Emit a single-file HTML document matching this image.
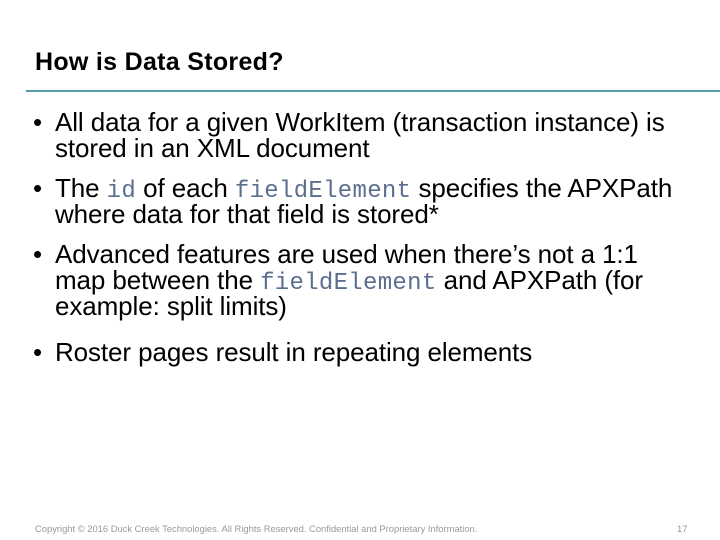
<!DOCTYPE html>
<html><head><style>
body{margin:0;width:720px;height:540px;background:#fff;position:relative;overflow:hidden;font-family:"Liberation Sans",Arial,sans-serif;color:#000}
.t{position:absolute;left:35px;top:48px;font-size:25px;font-weight:bold;letter-spacing:0.3px}
.rule{position:absolute;left:26px;top:90px;width:694px;height:2px;background:#5a99a8}
.l{position:absolute;left:55px;font-size:26px;white-space:nowrap;line-height:26px;letter-spacing:-0.1px}
.b{position:absolute;left:33px;font-size:26px;line-height:26px}
code{font-family:"Liberation Mono",monospace;color:#5b6f8f;font-size:24px;letter-spacing:0.3px}
.f{position:absolute;left:35px;top:523px;font-size:9.4px;color:#999}
.n{position:absolute;left:677px;top:523px;font-size:9.4px;color:#999}
</style></head><body>
<div class="t">How is Data Stored?</div>
<div class="rule"></div>
<div class="b" style="top:109px">•</div>
<div class="l" style="top:109px">All data for a given WorkItem (transaction instance) is</div>
<div class="l" style="top:135px">stored in an XML document</div>
<div class="b" style="top:175px">•</div>
<div class="l" style="top:175px">The <code>id</code> of each <code>fieldElement</code> specifies the APXPath</div>
<div class="l" style="top:201px">where data for that field is stored*</div>
<div class="b" style="top:241px">•</div>
<div class="l" style="top:241px">Advanced features are used when there’s not a 1:1</div>
<div class="l" style="top:267px">map between the <code>fieldElement</code> and APXPath (for</div>
<div class="l" style="top:293px">example: split limits)</div>
<div class="b" style="top:339px">•</div>
<div class="l" style="top:339px">Roster pages result in repeating elements</div>
<div class="f">Copyright © 2016 Duck Creek Technologies. All Rights Reserved. Confidential and Proprietary Information.</div>
<div class="n">17</div>
</body></html>
